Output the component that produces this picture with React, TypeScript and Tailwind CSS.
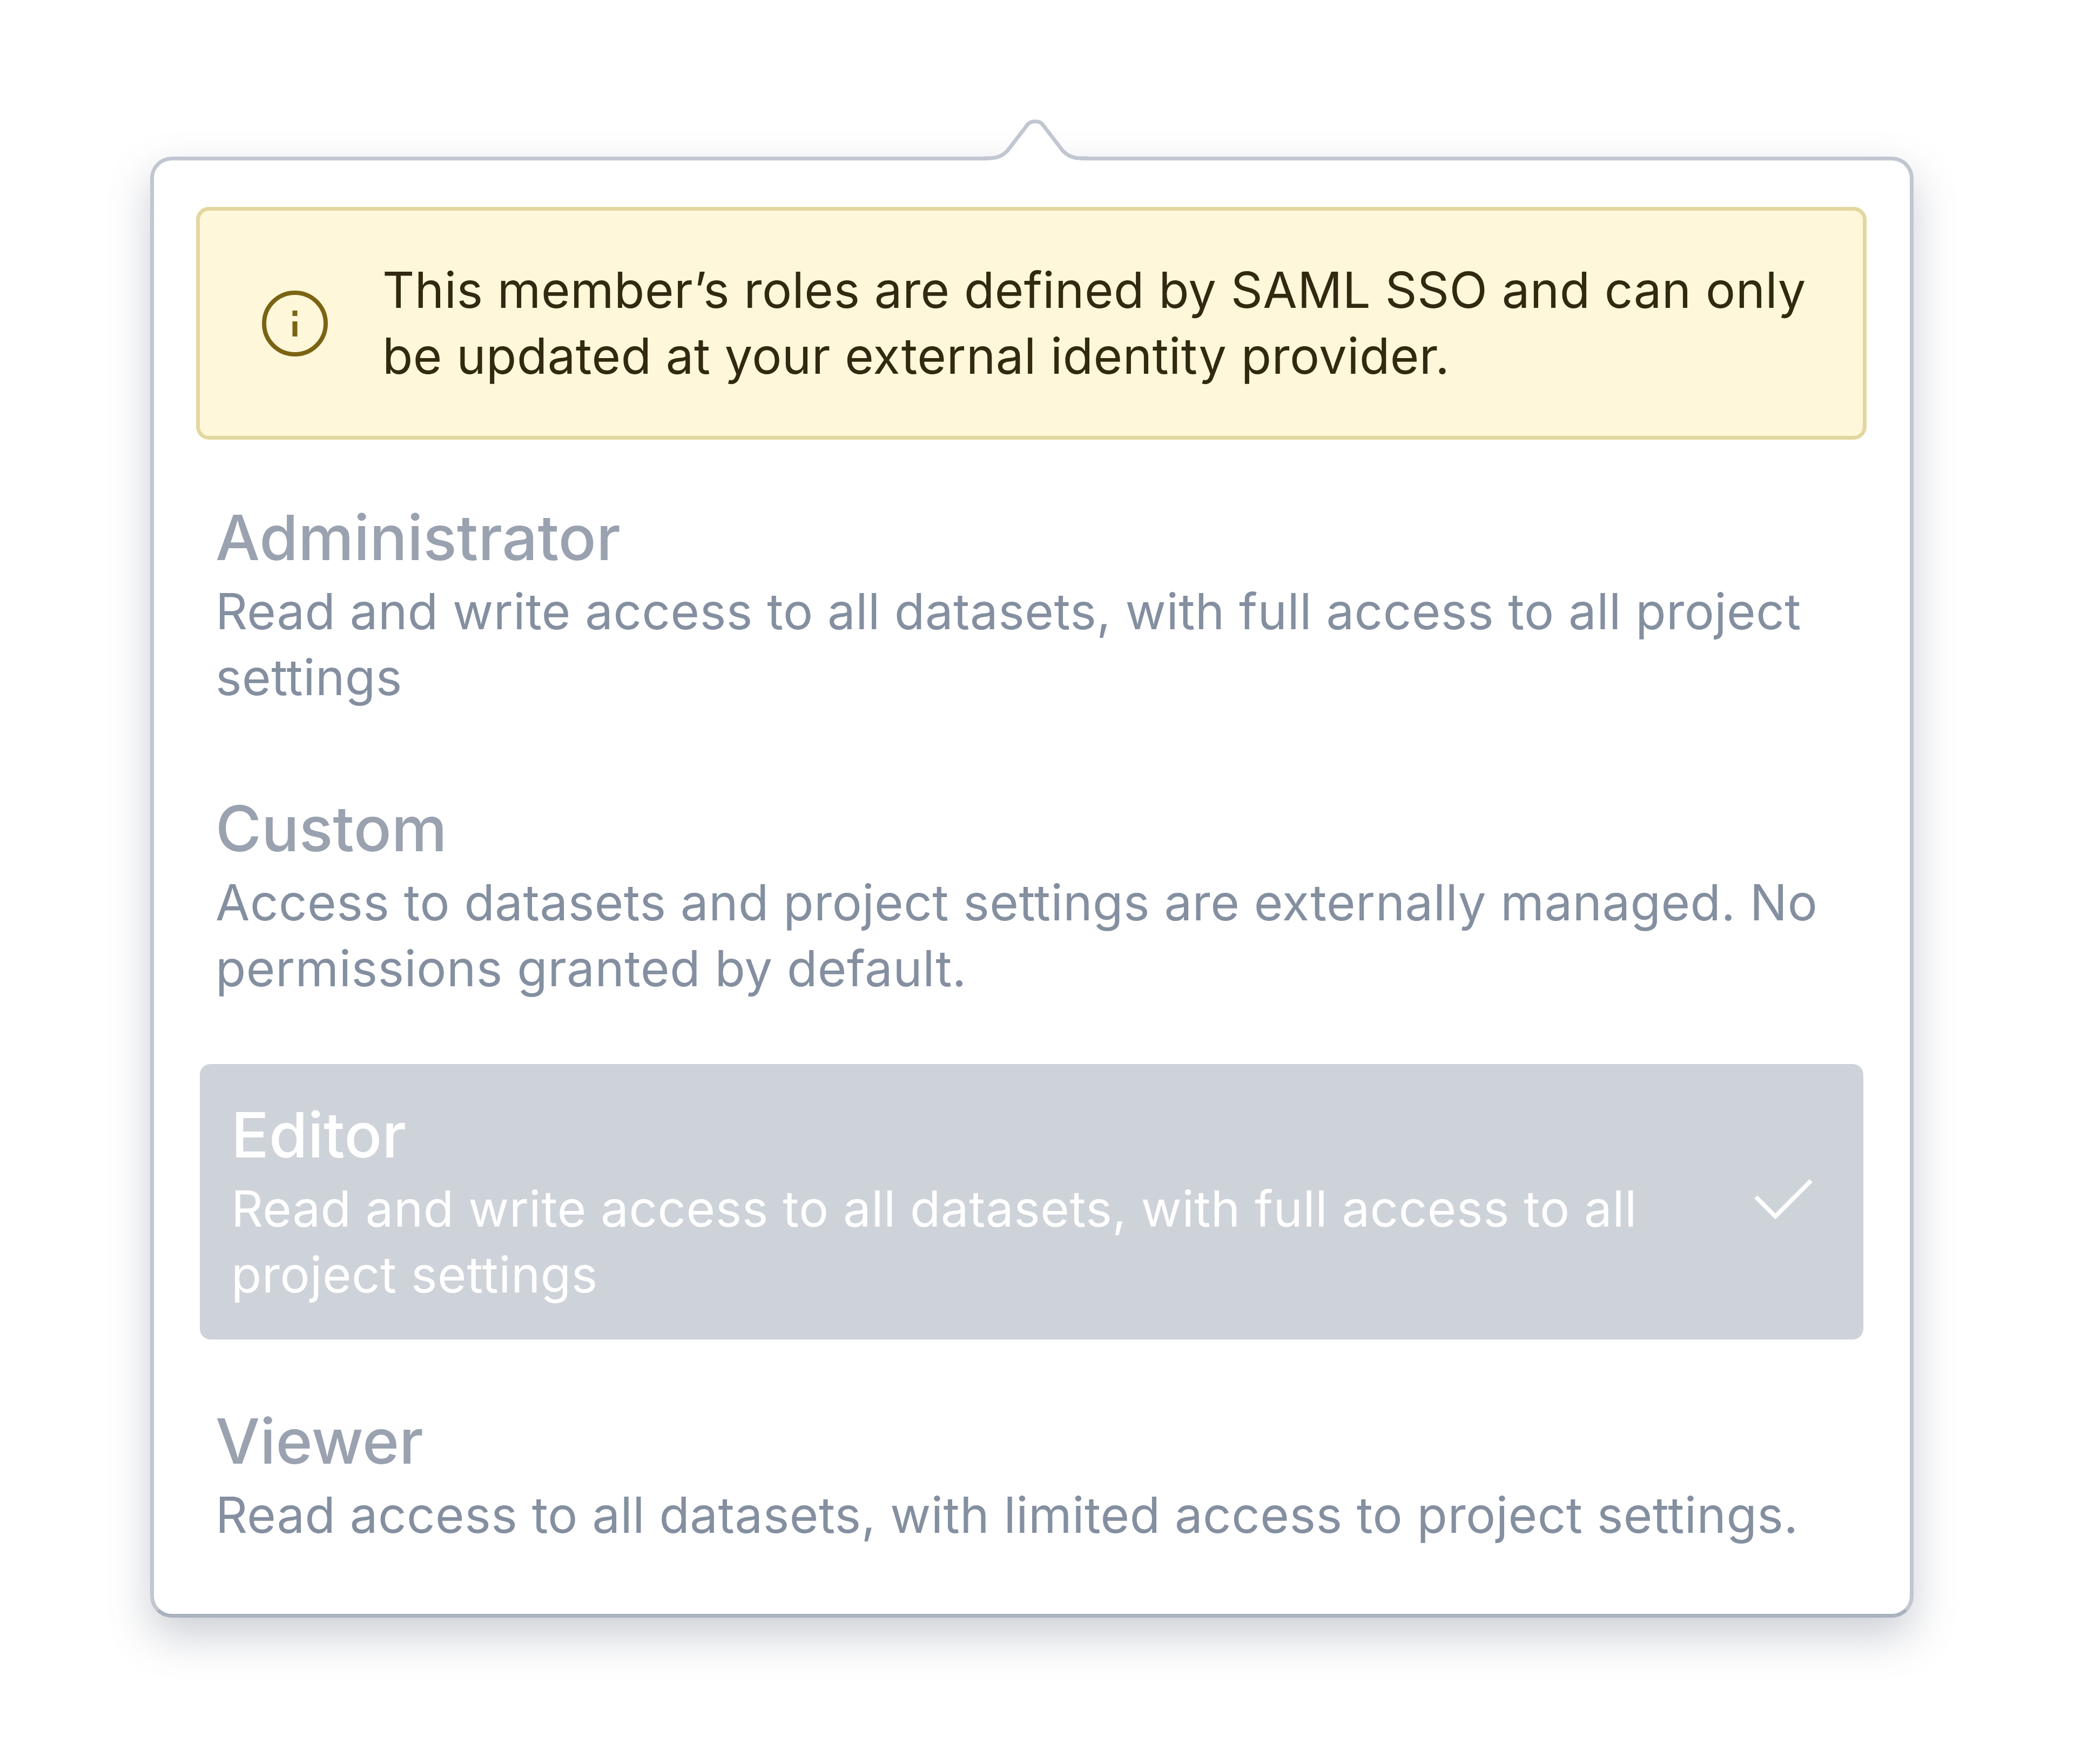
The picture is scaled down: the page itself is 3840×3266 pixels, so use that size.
import React from 'react';

type Role = {
  name: string;
  lines: string;
  selected?: boolean;
};

const roles: Role[] = [
  { name: 'Administrator', lines: 'Read and write access to all datasets, with full access to all project settings' },
  { name: 'Custom', lines: 'Access to datasets and project settings are externally managed. No permissions granted by default.' },
  { name: 'Editor', lines: 'Read and write access to all datasets, with full access to all project settings', selected: true },
  { name: 'Viewer', lines: 'Read access to all datasets, with limited access to project settings.' },
];

const InfoIcon = () => (
  <svg viewBox="0 0 122 122" className="w-[122px] h-[122px] shrink-0">
    <circle cx="61" cy="61" r="57" fill="none" stroke="#7a6414" strokeWidth="8" />
    <rect x="56.5" y="37" width="9" height="10" fill="#7a6414" />
    <rect x="56.5" y="57" width="9" height="28" fill="#7a6414" />
  </svg>
);

const CheckIcon = () => (
  <svg viewBox="0 0 110 76" className="w-[110px] h-[76px] shrink-0">
    <path d="M3 33 L39 69 L105 3" fill="none" stroke="#ffffff" strokeWidth="8" />
  </svg>
);

const RoleRow = ({ role }: { role: Role }) => {
  if (role.selected) {
    return (
      <div className="ml-[7px] w-[3080px] h-[510px] rounded-[20px] bg-[#ced2d9] flex items-center pl-[58px] pr-[92px] text-white">
        <div className="flex-1 min-w-0 pr-[200px] -mt-[4px]">
          <div className="text-[116px] leading-[152px] font-medium">{role.name}</div>
          <p className="text-[92px] leading-[122px] tracking-[0.5px]">{role.lines}</p>
        </div>
        <div className="-mt-[8px]">
          <CheckIcon />
        </div>
      </div>
    );
  }

  return (
    <div className="pl-[36px] pr-[38px] text-[#848fa0]">
      <div className="text-[116px] leading-[152px] font-medium text-[#9aa2b0]">{role.name}</div>
      <p className="text-[92px] leading-[122px] tracking-[0.5px]">{role.lines}</p>
    </div>
  );
};

export default function App() {
  return (
    <div className="min-h-[3266px] bg-white pt-[290px] pl-[278px] font-['Inter',sans-serif]">
      <div className="relative w-[3265px] h-[2705px] rounded-[40px] bg-white border-[7px] border-[#c1c6d1] border-b-[#aab1bf] shadow-[0_34px_80px_rgba(85,95,115,0.3)] pt-[86px] pl-[78px]">
        {/* Arrow on the top edge */}
        <svg viewBox="0 0 195 82" className="absolute left-[1535px] top-[-79px] w-[195px] h-[82px]">
          <path
            d="M10 82 V75 C30 75 41 68 50 55 L83 12 C90 5 104 5 110 12 L143 55 C152 68 163 75 182 75 V82 Z"
            fill="#ffffff"
          />
          <path
            d="M0 75 H10 C30 75 41 68 50 55 L83 12 C90 5 104 5 110 12 L143 55 C152 68 163 75 182 75 H195"
            fill="none"
            stroke="#c1c6d1"
            strokeWidth="7"
          />
        </svg>

        {/* SAML notice */}
        <div className="w-[3093px] h-[431px] rounded-[24px] bg-[#fef7da] border-[7px] border-[#e3d7a0] flex items-center pl-[115px] text-[#2f2a10]">
          <InfoIcon />
          <p className="ml-[101px] -mt-[2px] w-[2700px] text-[92px] leading-[122px] tracking-[0.47px]">
            This member’s roles are defined by SAML SSO and can only be updated at your external identity provider.
          </p>
        </div>

        <div className="mt-[105px] flex flex-col">
          {roles.map((role, idx) => (
            <div key={idx} className={idx === 1 ? 'mt-[143px]' : idx === 2 ? 'mt-[116px]' : idx === 3 ? 'mt-[112px]' : ''}>
              <RoleRow role={role} />
            </div>
          ))}
        </div>
      </div>
    </div>
  );
}
